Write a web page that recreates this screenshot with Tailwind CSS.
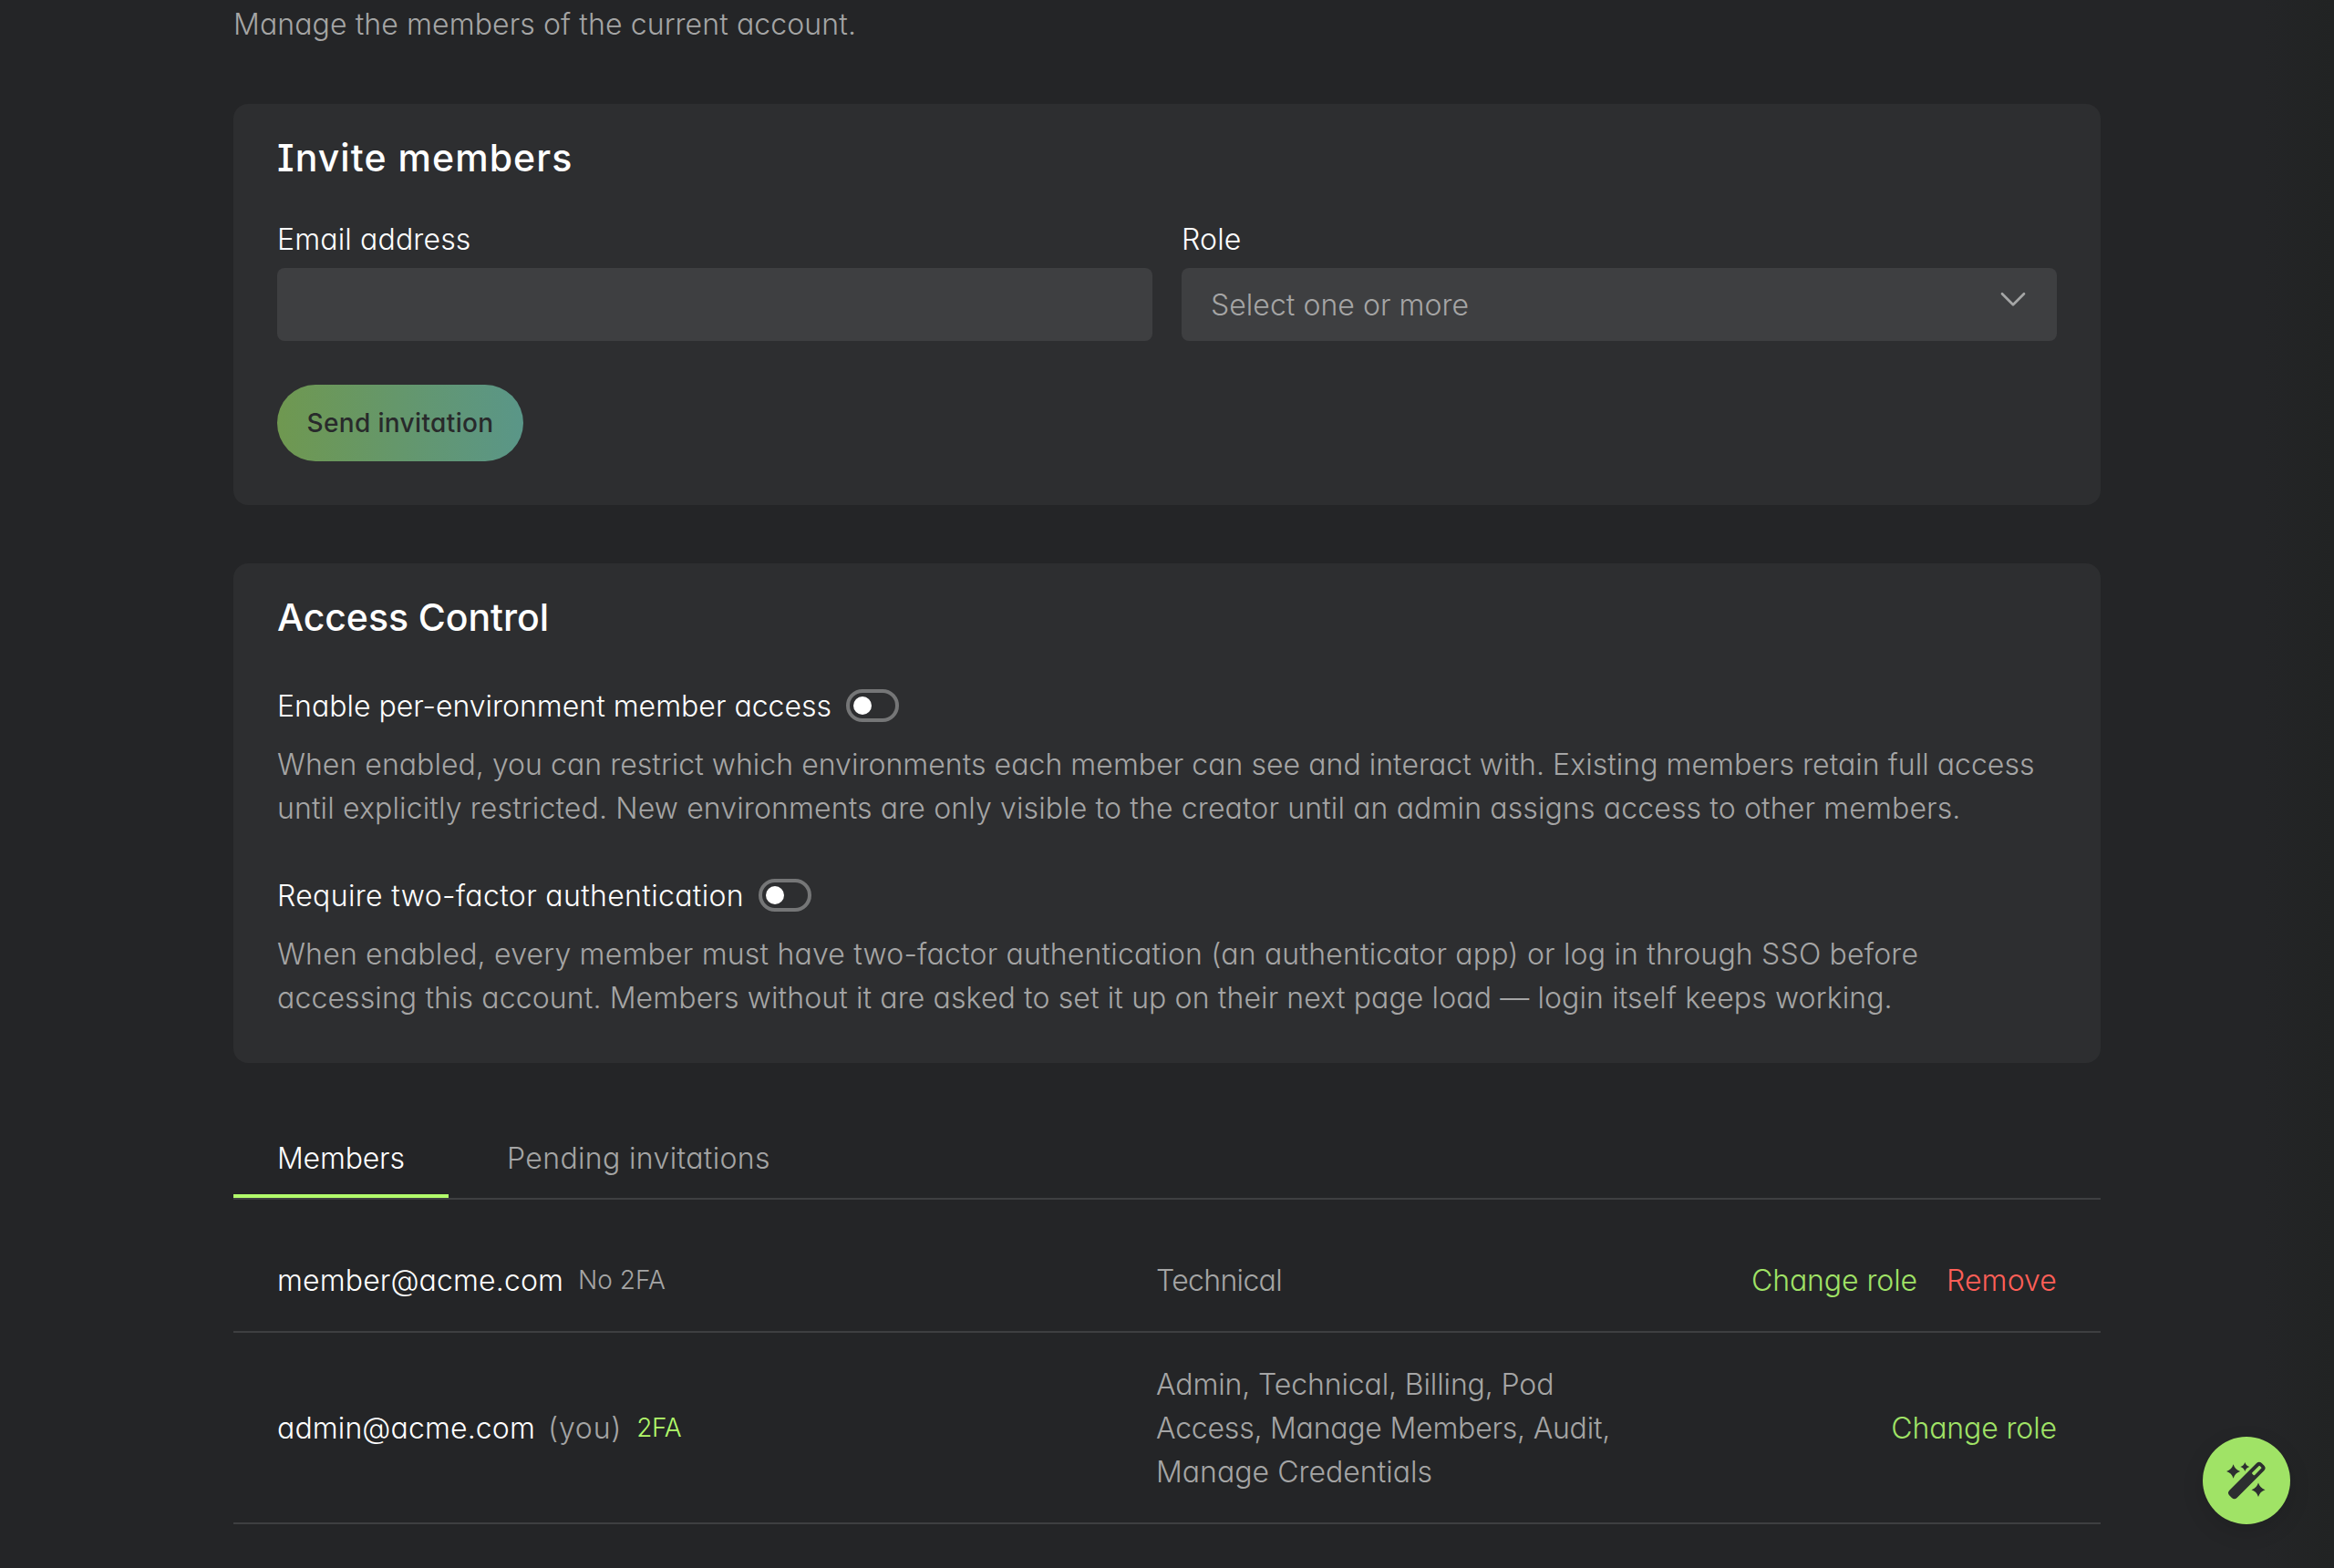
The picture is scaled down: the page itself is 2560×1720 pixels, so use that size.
<!DOCTYPE html>
<html lang="en">
<head>
    <meta charset="UTF-8">
    <meta name="viewport" content="width=device-width, initial-scale=1.0">
    <title>Members</title>
    <script src="https://cdn.jsdelivr.net/npm/@tailwindcss/browser@4"></script>
    <style>
        body {
            font-family: 'Inter', sans-serif;
            font-feature-settings: 'cv11', 'cv08';
        }
    </style>
</head>
<body class="h-[1720px] overflow-hidden bg-[#242527] bg-[linear-gradient(to_right,#242527_97%,#212323)] text-[32px] leading-[48px] font-light text-white">
    <main class="mx-auto w-[2048px] pt-[3px]">
        <p class="tracking-[0.1px] text-[#a5a5a5]">Manage the members of the current account.</p>

        <!-- Invite members -->
        <section class="mt-[63px] rounded-2xl bg-[#2d2e30] px-12 pt-[35px] pb-12">
            <h2 class="mb-[42px] text-[41px] leading-[48px] font-medium tracking-[1.07px]">Invite members</h2>
            <div class="grid grid-cols-2 gap-8">
                <div>
                    <label for="email" class="mb-[7px] block tracking-[0.15px]">Email address</label>
                    <input id="email" type="email" class="block h-20 w-full rounded-lg bg-[#3e3f41] px-8">
                </div>
                <div>
                    <div class="mb-[7px] tracking-[0.16px]">Role</div>
                    <div class="flex h-20 justify-between rounded-lg bg-[#3e3f41] px-8 py-4">
                        <span class="mt-px tracking-[0.03px] text-[#a5a5a5]">Select one or more</span>
                        <svg class="mt-[2px] h-8 w-8" viewBox="0 0 32 32" fill="none" stroke="#a5a6a6" stroke-width="2.7" stroke-linecap="round" stroke-linejoin="round">
                            <path d="M4 10.2 16 22.2 28 10.2" />
                        </svg>
                    </div>
                </div>
            </div>
            <button class="mt-12 block h-[84px] w-[270px] rounded-full bg-[linear-gradient(to_right,#6f9850,#5a9688)] text-[28px] font-medium tracking-[0.36px] whitespace-nowrap text-[#282a2b]">Send invitation</button>
        </section>

        <!-- Access control -->
        <section class="mt-16 rounded-2xl bg-[#2d2e30] px-12 pt-[35px] pb-12">
            <h2 class="mb-[49px] text-[41px] leading-[48px] font-medium tracking-[-0.07px]">Access Control</h2>
            <div class="flex items-center gap-4">
                <span class="mt-px -mb-px w-[608px] whitespace-nowrap">Enable per-environment member access</span>
                <span class="flex h-9 w-[58px] items-center rounded-full border-4 border-[#757677] px-1">
                    <span class="size-5 rounded-full bg-white"></span>
                </span>
            </div>
            <p class="mt-[17px] -mb-px whitespace-nowrap text-[#a5a5a5]">
                <span class="tracking-[0.038px]">When enabled, you can restrict which environments each member can see and interact with. Existing members retain full access</span><br>
                <span class="tracking-[0.135px]">until explicitly restricted. New environments are only visible to the creator until an admin assigns access to other members.</span>
            </p>
            <div class="mt-12 flex items-center gap-4">
                <span class="mt-px -mb-px w-[512px] tracking-[0.344px] whitespace-nowrap">Require two-factor authentication</span>
                <span class="flex h-9 w-[58px] items-center rounded-full border-4 border-[#757677] px-1">
                    <span class="size-5 rounded-full bg-white"></span>
                </span>
            </div>
            <p class="mt-[17px] -mb-px whitespace-nowrap text-[#a5a5a5]">
                <span class="tracking-[0.19px]">When enabled, every member must have two-factor authentication (an authenticator app) or log in through SSO before</span><br>
                <span class="tracking-[0.118px]">accessing this account. Members without it are asked to set it up on their next page load — login itself keeps working.</span>
            </p>
        </section>

        <!-- Tabs -->
        <nav class="mt-12 flex gap-4 border-b-2 border-[#3e3f41]">
            <a class="w-[236px] border-b-4 border-[#b2fb6b] px-12 pt-[33px] pb-[15px] tracking-[-0.2px]">Members</a>
            <a class="border-b-4 border-transparent px-12 pt-[33px] pb-[15px] tracking-[0.36px] text-[#a5a5a5]">Pending invitations</a>
        </nav>

        <!-- Member list -->
        <div class="pt-8">
            <div class="grid grid-cols-[964px_512px_1fr] items-center border-b-2 border-[#3e3f41] px-12 pt-[33px] pb-[31px]">
                <div class="flex items-center gap-4">
                    <span class="tracking-[0.12px]">member@acme.com</span>
                    <span class="-mt-0.5 text-[28px] text-[#a5a5a5]">No 2FA</span>
                </div>
                <div class="tracking-[-0.67px] text-[#a5a5a5]">Technical</div>
                <div class="flex justify-end gap-8">
                    <a class="tracking-[-0.09px] text-[#a0e366]">Change role</a>
                    <a class="tracking-[0.1px] text-[#ff5f57]">Remove</a>
                </div>
            </div>
            <div class="grid grid-cols-[964px_512px_1fr] items-center border-b-2 border-[#3e3f41] px-12 pt-[33px] pb-[31px]">
                <div class="flex items-center gap-4">
                    <span class="tracking-[0.12px]">admin@acme.com</span>
                    <span class="-ml-0.5 tracking-[0.8px] text-[#a5a5a5]">(you)</span>
                    <span class="-mt-0.5 text-[28px] tracking-[-0.3px] text-[#b2fb6b]">2FA</span>
                </div>
                <div class="text-[#a5a5a5]">
                    <span class="tracking-[-0.12px]">Admin, Technical, Billing, Pod</span>
                    <span class="tracking-[-0.22px]">Access, Manage Members, Audit,</span>
                    <span class="tracking-[0.02px]">Manage Credentials</span>
                </div>
                <div class="flex justify-end">
                    <a class="tracking-[-0.12px] text-[#a0e366]">Change role</a>
                </div>
            </div>
        </div>
    </main>

    <!-- Assistant button -->
    <button class="fixed right-12 bottom-12 size-24 rounded-full bg-[#a0e366] shadow-[0_8px_24px_rgba(0,0,0,0.12)]">
        <svg class="size-24" viewBox="0 0 96 96" fill="#2d2e30">
            <g transform="translate(48.3 48) rotate(-45)">
                <rect x="-25" y="-5.8" width="50" height="11.6" rx="4" />
                <rect x="9.5" y="-1.9" width="12" height="3.8" rx="1" fill="#a0e366" />
            </g>
            <path d="M33.6 30.3q1.8 5.9 7.5 7.7q-5.7 1.8-7.5 7.7q-1.8-5.9-7.5-7.7q5.7-1.8 7.5-7.7z" />
            <path d="M46.3 28q1.2 3.8 5 5q-3.8 1.2-5 5q-1.2-3.8-5-5q3.8-1.2 5-5z" />
            <path d="M61 50.5q1.8 5.9 7.5 7.7q-5.7 1.8-7.5 7.7q-1.8-5.9-7.5-7.7q5.7-1.8 7.5-7.7z" />
        </svg>
    </button>
</body>
</html>
